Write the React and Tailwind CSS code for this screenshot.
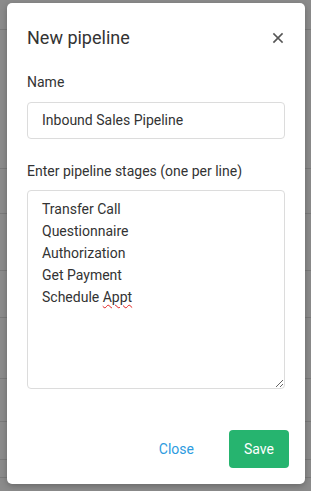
import React from "react";

const lineYs = [29, 168, 213, 270, 317, 378, 421, 459, 477];

export default function App() {
  return (
    <div
      className="relative w-[311px] h-[491px] overflow-hidden bg-[#8b8b8b]"
      style={{ fontFamily: "Roboto, 'Liberation Sans', sans-serif" }}
    >
      {/* backdrop rows */}
      {lineYs.map((y) => (
        <div
          key={y}
          className="absolute left-0 right-0 h-px bg-[#7a7a7a]"
          style={{ top: y }}
        />
      ))}

      {/* modal */}
      <div className="absolute left-[7px] top-[3px] w-[298px] h-[481px] bg-white rounded-[5px] shadow-[0_2px_6px_rgba(0,0,0,0.25)] flex flex-col">
        <div className="flex items-center justify-between pl-5 pr-[21px] pt-6">
          <h2 className="text-[18px] leading-[22px] text-[#333]">New pipeline</h2>
          <svg width="12" height="12" viewBox="0 0 12 12" className="text-[#555]">
            <path d="M2 2 L10 10 M10 2 L2 10" stroke="currentColor" strokeWidth="1.7" strokeLinecap="square" />
          </svg>
        </div>

        <div className="px-5 pt-[23px] flex flex-col">
          <label className="text-[14px] leading-5 text-[#333]">Name</label>
          <div className="mt-[10px] h-[37px] border border-[#dcdcdc] rounded-[4px] flex items-center px-[14px] text-[14px] text-[#333]">
            Inbound Sales Pipeline
          </div>

          <label className="mt-[22px] text-[14px] leading-5 text-[#333]">
            Enter pipeline stages (one per line)
          </label>
          <div className="mt-[9px] h-[199px] border border-[#dcdcdc] rounded-[4px] px-[14px] pt-[7px] text-[14px] leading-[22px] text-[#333] resize overflow-auto">
            <div>Transfer Call</div>
            <div>Questionnaire</div>
            <div>Authorization</div>
            <div>Get Payment</div>
            <div>
              Schedule{" "}
              <span className="underline decoration-wavy decoration-[#e02020] decoration-1 underline-offset-2">
                Appt
              </span>
            </div>
          </div>
        </div>

        <div className="flex-1" />

        <div className="flex items-center justify-end pr-4 pb-4 gap-[19px]">
          <button className="h-[38px] px-4 text-[14px] text-[#2d9be0]">Close</button>
          <button className="h-[38px] w-[60px] rounded-[4px] bg-[#26b46f] text-[14px] text-white">
            Save
          </button>
        </div>
      </div>
    </div>
  );
}
